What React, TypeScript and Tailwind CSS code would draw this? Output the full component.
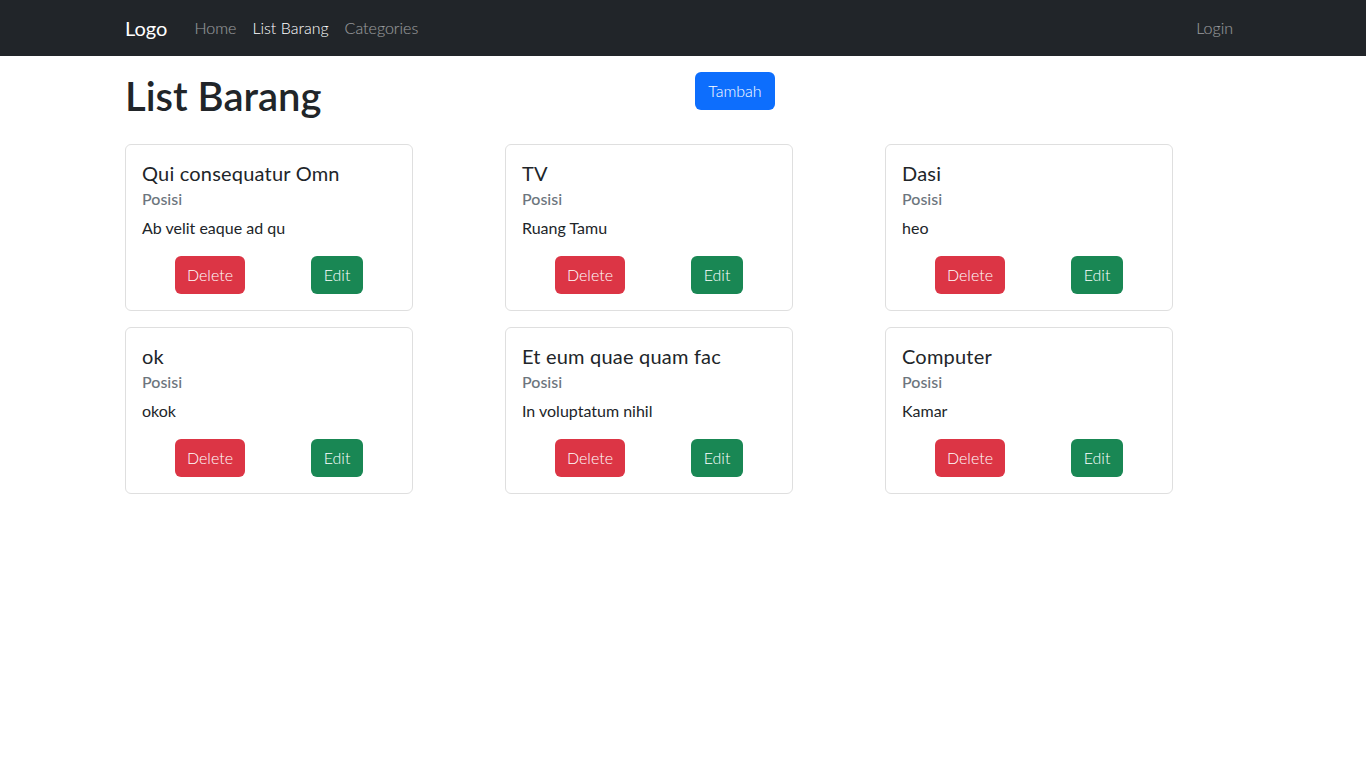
import React from 'react';

const items = [
  { name: 'Qui consequatur Omn', posisi: 'Ab velit eaque ad qu' },
  { name: 'TV', posisi: 'Ruang Tamu' },
  { name: 'Dasi', posisi: 'heo' },
  { name: 'ok', posisi: 'okok' },
  { name: 'Et eum quae quam fac', posisi: 'In voluptatum nihil' },
  { name: 'Computer', posisi: 'Kamar' },
];

function ItemCard({ name, posisi }: { name: string; posisi: string }) {
  return (
    <div className="w-[288px] rounded-[6px] border border-[#dfdfdf] bg-white p-4">
      <h5 className="mb-2 text-[20px] leading-6 font-normal tracking-[0.2px] text-[#212529]">{name}</h5>
      <h6 className="-mt-1 mb-2 text-[16px] leading-[19px] font-medium text-[#6c757d]">Posisi</h6>
      <p className="mb-4 text-[16px] leading-6 font-normal text-[#212529]">{posisi}</p>
      <div className="flex justify-around">
        <button className="h-[38px] w-[70px] rounded-[6px] bg-[#dc3545] text-[16px] font-light text-white">Delete</button>
        <button className="h-[38px] w-[52px] rounded-[6px] bg-[#198754] text-[16px] font-light text-white">Edit</button>
      </div>
    </div>
  );
}

export default function App() {
  return (
    <div className="min-h-screen bg-white font-['Segoe_UI','Lato','Liberation_Sans',sans-serif] text-[#212529]">
      <nav className="h-14 bg-[#212529]">
        <div className="mx-auto flex h-full w-[1140px] items-center px-3">
          <a className="mr-[19px] text-[20px] leading-[30px] text-white">Logo</a>
          <div className="flex flex-1 items-center">
            <a className="px-2 text-[16px] font-light text-white/55">Home</a>
            <a className="px-2 text-[16px] font-light text-white">List Barang</a>
            <a className="px-2 text-[16px] font-light text-white/55">Categories</a>
          </div>
          <a className="px-2 text-[16px] font-light text-white/55">Login</a>
        </div>
      </nav>

      <div className="mx-auto w-[1140px] px-3 pt-4">
        <div className="-mx-3 flex">
          <div className="w-1/2 px-3">
            <h1 className="mb-2 text-[40px] leading-[48px] font-semibold">List Barang</h1>
          </div>
          <div className="w-1/2 px-3">
            <button className="h-[38px] w-[80px] rounded-[6px] bg-[#0d6efd] text-[16px] font-light text-white">Tambah</button>
          </div>
        </div>

        <div className="-mx-3 mt-4 grid grid-cols-3 gap-y-4">
          {items.map((it) => (
            <div key={it.name} className="px-3">
              <ItemCard name={it.name} posisi={it.posisi} />
            </div>
          ))}
        </div>
      </div>
    </div>
  );
}
